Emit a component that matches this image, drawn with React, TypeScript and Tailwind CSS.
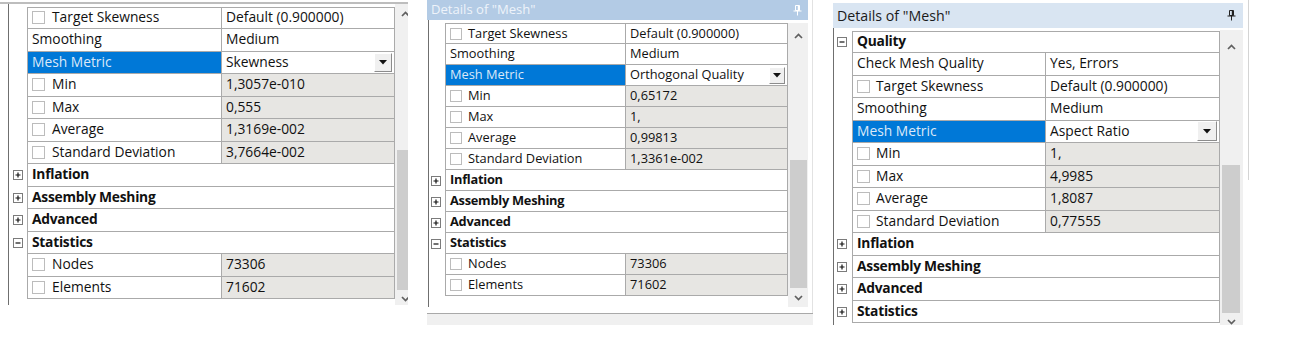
import React from 'react';

type Row =
  | { kind: 'cat'; label: string; open: boolean }
  | { kind: 'prop'; label: string; value: string; check?: boolean; ro?: boolean; sel?: boolean };

type V = {
  row: string;
  text: string;
  gut: string;
  name: string;
  val: string;
  cat: string;
  box: string;
  exp: string;
  btn: string;
};

// panel 1 and 3 are the bigger screenshots, panel 2 a slightly smaller one
const V1: V = {
  row: 'h-[22.5px]',
  text: 'text-[13.8px]',
  gut: 'w-[18px] pl-[4px]',
  name: 'w-[195px]',
  val: 'w-[173px]',
  cat: 'w-[368px]',
  box: 'w-[13px] h-[13px] mr-[7px]',
  exp: 'w-[10px] h-[10px]',
  btn: 'w-[18px] h-[19px]',
};

const V2: V = {
  row: 'h-[21px]',
  text: 'text-[12.8px]',
  gut: 'w-[16px] pl-[2px]',
  name: 'w-[181px]',
  val: 'w-[162px]',
  cat: 'w-[343px]',
  box: 'w-[12px] h-[12px] mr-[6px]',
  exp: 'w-[10px] h-[10px]',
  btn: 'w-[16px] h-[17px]',
};

const V3: V = {
  row: 'h-[22.5px]',
  text: 'text-[13.8px]',
  gut: 'w-[18px] pl-[3px]',
  name: 'w-[194px]',
  val: 'w-[174px]',
  cat: 'w-[368px]',
  box: 'w-[13px] h-[13px] mr-[6px]',
  exp: 'w-[10px] h-[10px]',
  btn: 'w-[20px] h-[20px]',
};

const stats = (min: string, max: string, avg: string, sd: string): Row[] => [
  { kind: 'prop', label: 'Min', value: min, check: true, ro: true },
  { kind: 'prop', label: 'Max', value: max, check: true, ro: true },
  { kind: 'prop', label: 'Average', value: avg, check: true, ro: true },
  { kind: 'prop', label: 'Standard Deviation', value: sd, check: true, ro: true },
];

const tail: Row[] = [
  { kind: 'cat', label: 'Inflation', open: false },
  { kind: 'cat', label: 'Assembly Meshing', open: false },
  { kind: 'cat', label: 'Advanced', open: false },
  { kind: 'cat', label: 'Statistics', open: true },
  { kind: 'prop', label: 'Nodes', value: '73306', check: true, ro: true },
  { kind: 'prop', label: 'Elements', value: '71602', check: true, ro: true },
];

const rows1: Row[] = [
  { kind: 'prop', label: 'Target Skewness', value: 'Default (0.900000)', check: true },
  { kind: 'prop', label: 'Smoothing', value: 'Medium' },
  { kind: 'prop', label: 'Mesh Metric', value: 'Skewness', sel: true },
  ...stats('1,3057e-010', '0,555', '1,3169e-002', '3,7664e-002'),
  ...tail,
];

const rows2: Row[] = [
  { kind: 'prop', label: 'Target Skewness', value: 'Default (0.900000)', check: true },
  { kind: 'prop', label: 'Smoothing', value: 'Medium' },
  { kind: 'prop', label: 'Mesh Metric', value: 'Orthogonal Quality', sel: true },
  ...stats('0,65172', '1,', '0,99813', '1,3361e-002'),
  ...tail,
];

const rows3: Row[] = [
  { kind: 'cat', label: 'Quality', open: true },
  { kind: 'prop', label: 'Check Mesh Quality', value: 'Yes, Errors' },
  { kind: 'prop', label: 'Target Skewness', value: 'Default (0.900000)', check: true },
  { kind: 'prop', label: 'Smoothing', value: 'Medium' },
  { kind: 'prop', label: 'Mesh Metric', value: 'Aspect Ratio', sel: true },
  ...stats('1,', '4,9985', '1,8087', '0,77555'),
  { kind: 'cat', label: 'Inflation', open: false },
  { kind: 'cat', label: 'Assembly Meshing', open: false },
  { kind: 'cat', label: 'Advanced', open: false },
  { kind: 'cat', label: 'Statistics', open: false },
];

function Expander({ open, v }: { open: boolean; v: V }) {
  return (
    <div className={`${v.exp} border border-[#7b7b7b] bg-white flex items-center justify-center`}>
      <svg width="8" height="8" viewBox="0 0 8 8">
        <path d={open ? 'M1.5 4h5' : 'M1.5 4h5M4 1.5v5'} stroke="#111" strokeWidth="1.2" fill="none" />
      </svg>
    </div>
  );
}

function DropButton({ v }: { v: V }) {
  return (
    <div
      className={`${v.btn} ml-auto mr-[2px] bg-[#f0f0f0] border border-t-white border-l-white border-r-[#8c8c8c] border-b-[#8c8c8c] flex items-center justify-center`}
    >
      <svg width="8" height="5" viewBox="0 0 8 5">
        <path d="M0 0h8L4 4.5z" fill="#111" />
      </svg>
    </div>
  );
}

function Grid({ rows, v }: { rows: Row[]; v: V }) {
  return (
    <div className={`flex flex-col ${v.text} text-[#111]`}>
      {rows.map((r, i) => {
        const top = i === 0 ? 'border-t' : '';
        return (
          <div key={i} className={`flex ${v.row}`}>
            <div className={`${v.gut} flex items-center bg-white`}>
              {r.kind === 'cat' && <Expander open={r.open} v={v} />}
            </div>
            {r.kind === 'cat' ? (
              <div
                className={`${v.cat} ${top} border-l border-r border-b border-[#aaaaaa] bg-white flex items-center pl-[4px] font-bold tracking-[-0.25px]`}
              >
                {r.label}
              </div>
            ) : (
              <>
                <div
                  className={`${v.name} ${top} border-l border-r border-b border-[#aaaaaa] flex items-center pl-[4px] whitespace-nowrap ${
                    r.sel ? 'bg-[#0078d7] text-[#dce9f7]' : 'bg-white'
                  }`}
                >
                  {r.check && <div className={`${v.box} border border-[#bcbcbc] bg-white shrink-0`} />}
                  {r.label}
                </div>
                <div
                  className={`${v.val} ${top} border-r border-b border-[#aaaaaa] flex items-center pl-[4px] whitespace-nowrap ${
                    r.ro ? 'bg-[#e7e6e3]' : 'bg-white'
                  }`}
                >
                  {r.value}
                  {r.sel && <DropButton v={v} />}
                </div>
              </>
            )}
          </div>
        );
      })}
    </div>
  );
}

function Chevron({ up }: { up?: boolean }) {
  return (
    <svg width="9" height="6" viewBox="0 0 9 6">
      <path d={up ? 'M1 5L4.5 1.5L8 5' : 'M1 1L4.5 4.5L8 1'} stroke="#5f5f5f" strokeWidth="1.7" fill="none" />
    </svg>
  );
}

function Pin({ color }: { color: string }) {
  return (
    <svg width="9" height="11" viewBox="0 0 9 11">
      <path d="M2.5 0.5h4v5h-4z" stroke={color} strokeWidth="1" fill="none" />
      <path d="M5.5 0.5v5" stroke={color} strokeWidth="1.4" />
      <path d="M0.5 6h8M4.5 6v4.5" stroke={color} strokeWidth="1" />
    </svg>
  );
}

function PanelOne() {
  return (
    <div className="w-[408px] pt-[2px] shrink-0">
      <div className="h-[2px] bg-[#bdbdbd]" />
      <div className="flex h-[301px]">
        <div className="w-[8px]" />
        <div className="w-px bg-[#6f6f6f]" />
        <div className="pt-[2.5px]">
          <Grid rows={rows1} v={V1} />
        </div>
        <div className="w-[13px] bg-[#f0f0f0] flex flex-col overflow-hidden">
          <div className="h-[18px] pl-[6px] pt-[7px]">
            <Chevron up />
          </div>
          <div className="h-[128px]" />
          <div className="h-[140px] ml-[2px] bg-[#cdcdcd]" />
          <div className="flex-1 pl-[6px] pt-[6px]">
            <Chevron />
          </div>
        </div>
      </div>
    </div>
  );
}

function PanelTwo() {
  return (
    <div className="w-[386px] flex flex-col shrink-0">
      <div className="flex h-[313px]">
        <div className="w-[385px] flex flex-col">
          <div className="w-[381px] h-[20px] bg-[#b3cbe5] text-[#eef3fa] text-[13.1px] flex items-center justify-between pl-[4px] pr-[6px]">
            <span>Details of "Mesh"</span>
            <Pin color="#ffffff" />
          </div>
          <div className="flex h-[287px]">
            <div className="w-px" />
            <div className="w-px bg-[#6f6f6f]" />
            <div className="pt-[3px]">
              <Grid rows={rows2} v={V2} />
            </div>
            <div className="w-[20px] mt-[3px] bg-[#f0f0f0] flex flex-col">
              <div className="h-[16px] flex items-end justify-center">
                <Chevron up />
              </div>
              <div className="h-[121px]" />
              <div className="h-[128px] ml-[2px] mr-px bg-[#cdcdcd]" />
              <div className="flex-1 flex items-start justify-center pt-[7px]">
                <Chevron />
              </div>
            </div>
          </div>
        </div>
        <div className="w-px bg-[#e2e2e2]" />
      </div>
      <div className="h-px bg-[#a9a9a9]" />
      <div className="h-[11px] bg-[#f0f0f0]" />
    </div>
  );
}

function PanelThree() {
  return (
    <div className="flex shrink-0">
      <div className="w-[415px] flex flex-col pt-[3px]">
        <div className="w-[410px] h-[25px] bg-[#d9e5f2] text-[#1b1b1b] text-[14.2px] flex items-center justify-between pl-[4px] pr-[7px]">
          <span>Details of "Mesh"</span>
          <Pin color="#222222" />
        </div>
        <div className="flex h-[297px]">
          <div className="w-px bg-[#6f6f6f]" />
          <div className="pt-[2.5px]">
            <Grid rows={rows3} v={V3} />
          </div>
          <div className="w-[23px] mt-[2px] bg-[#f0f0f0] flex flex-col overflow-hidden">
            <div className="h-[20px] flex items-end justify-center">
              <Chevron up />
            </div>
            <div className="h-[115px]" />
            <div className="h-[148px] ml-[2px] mr-[3px] bg-[#cdcdcd]" />
            <div className="flex-1 flex justify-center pt-[6px]">
              <Chevron />
            </div>
          </div>
        </div>
      </div>
      <div className="w-px h-[180px] bg-[#d4d4d4]" />
    </div>
  );
}

export default function App() {
  return (
    <div className="w-[1297px] h-[353px] bg-white flex items-start font-['Open_Sans',sans-serif]">
      <PanelOne />
      <div className="w-[19px] shrink-0" />
      <PanelTwo />
      <div className="w-[20px] shrink-0" />
      <PanelThree />
    </div>
  );
}
